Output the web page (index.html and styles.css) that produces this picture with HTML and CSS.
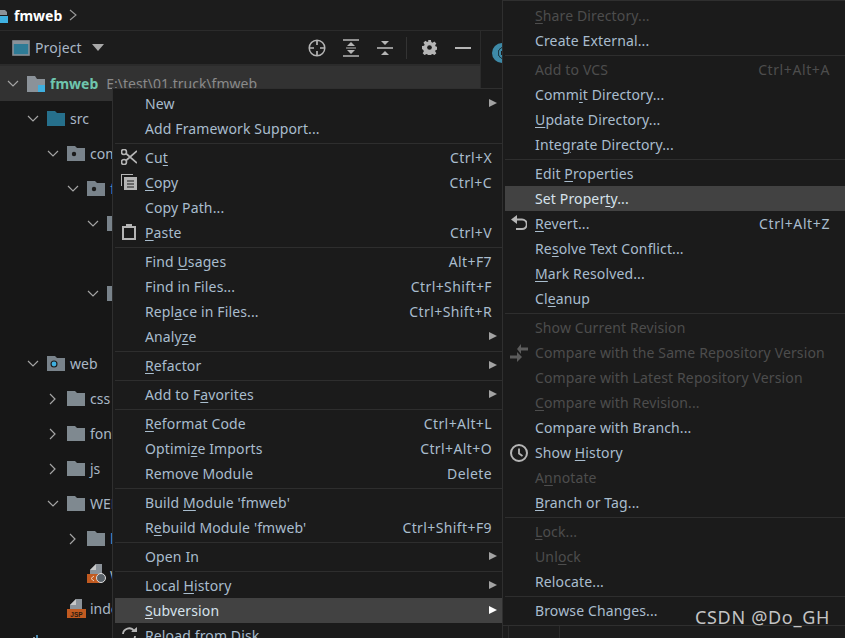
FILE: index.html
```html
<!DOCTYPE html>
<html lang="en">
<head>
<meta charset="utf-8">
<title>fmweb</title>
<link rel="stylesheet" href="styles.css">
</head>
<body>
<div class="ide">
  <div class="crumb">
    <svg class="ico16" viewBox="0 0 8 16"><path d="M-6 3H5l2 2v3H-6z" fill="#8b9299"/><rect x="0" y="9" width="8" height="7" fill="#3fb0e0"/></svg>
    <b>fmweb</b>
    <svg class="crumb-arrow" viewBox="0 0 8 12"><path d="M1 1l6 5-6 5" fill="none" stroke="#9a9a9a" stroke-width="1.1"/></svg>
  </div>
  <div class="panel">
    <div class="toolbar">
      <svg class="proj" viewBox="0 0 18 16"><rect x="1" y="1" width="16" height="14" fill="#2e7b96" stroke="#8a9198" stroke-width="1.6"/><rect x="1" y="1" width="16" height="3" fill="#8a9198"/></svg>
      <span class="proj-name">Project</span>
      <svg class="caret" viewBox="0 0 12 7"><path d="M0 0h12L6 7z" fill="#a8a8a8"/></svg>
      <div class="tools">
        <svg class="t18" viewBox="0 0 18 18"><circle cx="9" cy="9" r="7.800" fill="none" stroke="#b5b5b5" stroke-width="1.500"/><path d="M9 1v5M9 12v5M1 9h5M12 9h5" stroke="#b5b5b5" stroke-width="1.700"/></svg>
        <svg class="t16 wide" viewBox="0 0 16 18"><path d="M0 1h16M0 17h16" stroke="#b5b5b5" stroke-width="1.600"/><path d="M4 7l4-4 4 4zM4 11l4 4 4-4z" fill="#b5b5b5"/><path d="M3 9h10" stroke="#b5b5b5"/></svg>
        <svg class="t16" viewBox="0 0 16 18"><path d="M0 9h16" stroke="#b5b5b5" stroke-width="1.600"/><path d="M4 2l4 4 4-4zM4 16l4-4 4 4z" fill="#b5b5b5"/></svg>
        <i class="tool-sep"></i>
        <svg class="t15" viewBox="0 0 16 16"><path d="M6.500 0h3l.4 2.200 1.400.6 1.900-1.300 2.100 2.100-1.300 1.900.6 1.400 2.200.4v3l-2.200.4-.6 1.400 1.300 1.900-2.100 2.100-1.900-1.300-1.400.6-.4 2.200h-3l-.4-2.200-1.400-.6-1.900 1.300-2.100-2.100 1.300-1.900-.6-1.400L0 9.500v-3l2.200-.4.6-1.400-1.300-1.900 2.100-2.100 1.900 1.300 1.400-.6z" fill="#b5b5b5"/><circle cx="8" cy="8" r="2.500" fill="#1b1b1b"/></svg>
        <svg class="t16" viewBox="0 0 16 18"><path d="M0 9h16" stroke="#b5b5b5" stroke-width="2"/></svg>
      </div>
    </div>
    <div class="tree">
      <div class="row selected l0"><svg class="chev" viewBox="0 0 12 8"><path d="M1 1l5 5 5-5" fill="none" stroke="#a5a5a5" stroke-width="1.200"/></svg><svg class="fold tall" viewBox="0 0 18 16"><path d="M0 0h8l2 3h8v13H0z" fill="#8b9299"/><rect x="11" y="9" width="7" height="7" fill="#3fb0e0"/></svg><b class="root">fmweb</b><span class="path">E:\test\01.truck\fmweb</span></div>
      <div class="row l1"><svg class="chev" viewBox="0 0 12 8"><path d="M1 1l5 5 5-5" fill="none" stroke="#a5a5a5" stroke-width="1.200"/></svg><svg class="fold" viewBox="0 0 18 15"><path d="M0 0h8l2 2h8v13H0z" fill="#26708c"/></svg><span>src</span></div>
      <div class="row l2"><svg class="chev" viewBox="0 0 12 8"><path d="M1 1l5 5 5-5" fill="none" stroke="#a5a5a5" stroke-width="1.200"/></svg><svg class="fold" viewBox="0 0 18 15"><path d="M0 0h8l2 2h8v13H0z" fill="#79838b"/><circle cx="7" cy="8" r="2.200" fill="#1b1b1b"/></svg><span>com</span></div>
      <div class="row l3"><svg class="chev" viewBox="0 0 12 8"><path d="M1 1l5 5 5-5" fill="none" stroke="#a5a5a5" stroke-width="1.200"/></svg><svg class="fold" viewBox="0 0 18 15"><path d="M0 0h8l2 2h8v13H0z" fill="#79838b"/><circle cx="7" cy="8" r="2.200" fill="#1b1b1b"/></svg><span class="blue">fm</span></div>
      <div class="row l4"><svg class="chev" viewBox="0 0 12 8"><path d="M1 1l5 5 5-5" fill="none" stroke="#a5a5a5" stroke-width="1.200"/></svg><svg class="fold" viewBox="0 0 18 15"><path d="M0 0h8l2 2h8v13H0z" fill="#79838b"/></svg></div>
      <div class="row"></div>
      <div class="row l4"><svg class="chev" viewBox="0 0 12 8"><path d="M1 1l5 5 5-5" fill="none" stroke="#a5a5a5" stroke-width="1.200"/></svg><svg class="fold" viewBox="0 0 18 15"><path d="M0 0h8l2 2h8v13H0z" fill="#79838b"/></svg></div>
      <div class="row"></div>
      <div class="row l1"><svg class="chev" viewBox="0 0 12 8"><path d="M1 1l5 5 5-5" fill="none" stroke="#a5a5a5" stroke-width="1.200"/></svg><svg class="fold" viewBox="0 0 18 15"><path d="M0 0h8l2 2h8v13H0z" fill="#79838b"/><circle cx="7" cy="8" r="3.500" fill="#1b1b1b"/><circle cx="7" cy="8" r="2.400" fill="#3fb0e0"/></svg><span>web</span></div>
      <div class="row l2"><svg class="chev side" viewBox="0 0 8 12"><path d="M1 1l5 5-5 5" fill="none" stroke="#a5a5a5" stroke-width="1.200"/></svg><svg class="fold" viewBox="0 0 18 15"><path d="M0 0h8l2 2h8v13H0z" fill="#7f8990"/></svg><span>css</span></div>
      <div class="row l2"><svg class="chev side" viewBox="0 0 8 12"><path d="M1 1l5 5-5 5" fill="none" stroke="#a5a5a5" stroke-width="1.200"/></svg><svg class="fold" viewBox="0 0 18 15"><path d="M0 0h8l2 2h8v13H0z" fill="#7f8990"/></svg><span>fonts</span></div>
      <div class="row l2"><svg class="chev side" viewBox="0 0 8 12"><path d="M1 1l5 5-5 5" fill="none" stroke="#a5a5a5" stroke-width="1.200"/></svg><svg class="fold" viewBox="0 0 18 15"><path d="M0 0h8l2 2h8v13H0z" fill="#7f8990"/></svg><span>js</span></div>
      <div class="row l2"><svg class="chev" viewBox="0 0 12 8"><path d="M1 1l5 5 5-5" fill="none" stroke="#a5a5a5" stroke-width="1.200"/></svg><svg class="fold" viewBox="0 0 18 15"><path d="M0 0h8l2 2h8v13H0z" fill="#7f8990"/></svg><span>WEB-INF</span></div>
      <div class="row l3"><svg class="chev side" viewBox="0 0 8 12"><path d="M1 1l5 5-5 5" fill="none" stroke="#a5a5a5" stroke-width="1.200"/></svg><svg class="fold" viewBox="0 0 18 15"><path d="M0 0h8l2 2h8v13H0z" fill="#7f8990"/></svg><span class="blue">lib</span></div>
      <div class="row l3 nochev"><svg class="fold" viewBox="0 0 19 19"><path d="M9 0h6v10H3V6z" fill="#8b9299"/><path d="M3 6l6-6v6z" fill="#c8c8c8"/><rect x="0" y="10" width="13" height="9" fill="#c15a20"/><path d="M7 12l-3 2.500L7 17" fill="none" stroke="#e8d0c0"/><circle cx="14" cy="14" r="4.500" fill="#5a6269" stroke="#dedede"/></svg><span>web.xml</span></div>
      <div class="row l2 nochev"><svg class="fold" viewBox="0 0 19 19"><path d="M9 0h6v10H3V6z" fill="#8b9299"/><path d="M3 6l6-6v6z" fill="#c8c8c8"/><rect x="0" y="10" width="19" height="9" fill="#c15a20"/><text x="9.500" y="17.500" text-anchor="middle" class="jsp">JSP</text></svg><span>index.jsp</span></div>
      <div class="row l1 nochev"><svg class="tiny" viewBox="0 0 14 18"><path d="M1 4h2v14H1zM6 2h2v16H6z" fill="#8b9299"/><path d="M3.500 3h2v15h-2z" fill="#5f9e6e"/><path d="M9 0h2v18H9z" fill="#4d8cb0"/></svg></div>
    </div>
  </div>
  <div class="gutter"><i class="badge"></i></div>
</div>

<ul class="menu menu-main">
  <li class="item">New<em class="sub"></em></li>
  <li class="item">Add Framework Support...</li>
  <li class="sep"></li>
  <li class="item"><svg class="micon" viewBox="0 0 16 16"><circle cx="3" cy="13" r="2.500" fill="none" stroke="#b5b5b5" stroke-width="1.600"/><circle cx="3" cy="3" r="2.500" fill="none" stroke="#b5b5b5" stroke-width="1.600"/><path d="M5 4.500L16 14M5 11.500L16 2" stroke="#b5b5b5" stroke-width="1.700"/></svg>Cu<u>t</u><kbd>Ctrl+X</kbd></li>
  <li class="item"><svg class="micon" viewBox="0 0 16 16"><path d="M0 0h12v1H1v11H0z" fill="#b5b5b5"/><rect x="3" y="3" width="13" height="13" fill="#b5b5b5"/><path d="M6 7h7M6 10h7M6 13h7" stroke="#1b1b1b" stroke-width="1.200"/></svg><u>C</u>opy<kbd>Ctrl+C</kbd></li>
  <li class="item">Copy Path...</li>
  <li class="item"><svg class="micon" viewBox="0 0 16 16"><rect x="2" y="3" width="12" height="12" fill="none" stroke="#b5b5b5" stroke-width="2"/><rect x="5" y="0" width="6" height="4" fill="#b5b5b5"/></svg><u>P</u>aste<kbd>Ctrl+V</kbd></li>
  <li class="sep"></li>
  <li class="item">Find <u>U</u>sages<kbd>Alt+F7</kbd></li>
  <li class="item">Find in Files...<kbd>Ctrl+Shift+F</kbd></li>
  <li class="item">Repl<u>a</u>ce in Files...<kbd>Ctrl+Shift+R</kbd></li>
  <li class="item">Analy<u>z</u>e<em class="sub"></em></li>
  <li class="sep"></li>
  <li class="item"><u>R</u>efactor<em class="sub"></em></li>
  <li class="sep"></li>
  <li class="item">Add to F<u>a</u>vorites<em class="sub"></em></li>
  <li class="sep"></li>
  <li class="item"><u>R</u>eformat Code<kbd>Ctrl+Alt+L</kbd></li>
  <li class="item">Optimi<u>z</u>e Imports<kbd>Ctrl+Alt+O</kbd></li>
  <li class="item">Remove Module<kbd>Delete</kbd></li>
  <li class="sep"></li>
  <li class="item">Build <u>M</u>odule 'fmweb'</li>
  <li class="item">R<u>e</u>build Module 'fmweb'<kbd>Ctrl+Shift+F9</kbd></li>
  <li class="sep"></li>
  <li class="item">Open In<em class="sub"></em></li>
  <li class="sep"></li>
  <li class="item">Local <u>H</u>istory<em class="sub"></em></li>
  <li class="item active"><u>S</u>ubversion<em class="sub"></em></li>
  <li class="item"><svg class="micon" viewBox="0 0 16 16"><path d="M2 7a6 6 0 0 1 11-3M14 9a6 6 0 0 1-11 3" fill="none" stroke="#b5b5b5" stroke-width="1.800"/><path d="M10 5h6V0zM6 11H0v5z" fill="#b5b5b5"/></svg>Reload from Disk</li>
</ul>

<ul class="menu menu-sub">
  <li class="item off"><u>S</u>hare Directory...</li>
  <li class="item">Create External...</li>
  <li class="sep"></li>
  <li class="item off">Add to VCS<kbd>Ctrl+Alt+A</kbd></li>
  <li class="item">Comm<u>i</u>t Directory...</li>
  <li class="item"><u>U</u>pdate Directory...</li>
  <li class="item">Inte<u>g</u>rate Directory...</li>
  <li class="sep"></li>
  <li class="item">Edit <u>P</u>roperties</li>
  <li class="item active">Set Proper<u>t</u>y...</li>
  <li class="item"><svg class="micon" viewBox="0 0 16 16"><path d="M4 4.500h7a4.800 4.800 0 0 1 0 9.600H5" fill="none" stroke="#b5b5b5" stroke-width="2"/><path d="M6 0v9L0 4.500z" fill="#b5b5b5"/></svg><u>R</u>evert...<kbd>Ctrl+Alt+Z</kbd></li>
  <li class="item">Re<u>s</u>olve Text Conflict...</li>
  <li class="item"><u>M</u>ark Resolved...</li>
  <li class="item">Cl<u>e</u>anup</li>
  <li class="sep"></li>
  <li class="item off">Show Current Revision</li>
  <li class="item off"><svg class="micon big" viewBox="0 0 18 18"><path d="M11 0v10L7 5z" fill="#5c5c5c"/><path d="M11 3.500h7v3h-7z" fill="#5c5c5c"/><path d="M7 8v10l5-5z" fill="#5c5c5c"/><path d="M0 11.500h7v3H0z" fill="#5c5c5c"/></svg>Compare with the Same Repository Version</li>
  <li class="item off">Compare with Latest Repository Version</li>
  <li class="item off"><u>C</u>ompare with Revision...</li>
  <li class="item">Compare with Branch...</li>
  <li class="item"><svg class="micon big" viewBox="0 0 18 18"><circle cx="9" cy="9" r="8" fill="none" stroke="#b5b5b5" stroke-width="2"/><path d="M9 4.500V9.500L12.500 12" fill="none" stroke="#b5b5b5" stroke-width="1.800"/></svg>Show <u>H</u>istory</li>
  <li class="item off">A<u>n</u>notate</li>
  <li class="item"><u>B</u>ranch or Tag...</li>
  <li class="sep"></li>
  <li class="item off"><u>L</u>ock...</li>
  <li class="item off">Unl<u>o</u>ck</li>
  <li class="item">Relocate...</li>
  <li class="sep"></li>
  <li class="item">Browse Changes...</li>
</ul>

<div class="mark">CSDN @Do_GH</div>
</body>
</html>
```
FILE: styles.css
```css
* { box-sizing: border-box; }
html, body { margin: 0; height: 100%; overflow: hidden; background: #1c1c1c; }
body { position: relative; width: 845px; height: 638px; font: 14px "Noto Sans", "Open Sans", sans-serif; color: #a9b7c6; }
.ide { display: grid; grid-template-columns: 481px 1fr; grid-template-rows: 31px 1fr; height: 638px; background: #1c1c1c; }
.crumb { grid-column: 1 / 3; display: flex; align-items: center; gap: 6px; border-bottom: 1px solid #2b2b2b; color: #fff; }
.crumb b { font-size: 14px; font-weight: 700; }
.ico16 { width: 8px; height: 16px; }
.crumb-arrow { width: 8px; height: 12px; margin-left: 1px; }
.panel { border-right: 1px solid #2b2b2b; background: #171717; overflow: hidden; }
.toolbar { height: 35px; display: flex; align-items: center; padding-left: 12px; border-bottom: 2px solid #2b2b2b; background: #1c1c1c; }
.proj { width: 18px; height: 16px; }
.proj-name { margin-left: 5px; letter-spacing: .15px; }
.caret { width: 12px; height: 7px; margin-left: 10px; }
.tools { margin-left: auto; display: flex; align-items: center; gap: 17px; padding-right: 9px; }
.t18 { width: 18px; height: 18px; }
.t16 { width: 16px; height: 18px; }
.t16.wide { margin-right: 1px; }
.t15 { width: 15px; height: 15px; margin-right: 1px; }
.tool-sep { width: 1px; height: 22px; background: #333; margin: 0 -2px 0 -4px; }
.row { height: 35px; display: flex; align-items: center; gap: 5px; color: #a9b7c6; white-space: nowrap; }
.row:not(.selected) { width: 112px; overflow: hidden; }
.row.selected { background: #323232; }
.chev { width: 12px; height: 8px; flex: none; margin-right: 3px; }
.chev.side { width: 8px; height: 12px; margin: 0 5px 0 2px; }
.fold { width: 18px; height: 15px; flex: none; }
.fold.tall { height: 16px; }
.nochev .fold { width: 19px; height: 19px; }
.jsp { font: 700 6.500px "Liberation Sans", sans-serif; fill: #2a1a10; }
.tiny { width: 14px; height: 18px; }
.l0 { padding-left: 7px; }
.l1 { padding-left: 27px; }
.l2 { padding-left: 47px; }
.l3 { padding-left: 67px; }
.l4 { padding-left: 87px; }
.nochev { gap: 4px; }
.l2.nochev { padding-left: 67px; }
.l3.nochev { padding-left: 87px; }
.root { color: #6fc6ae; font-weight: 700; }
.path { color: #8a8a8a; margin-left: 3px; }
.blue { color: #4a90c8; }
.gutter { position: relative; background:
  linear-gradient(#2b2b2b, #2b2b2b) 0 57px / 100% 1px no-repeat,
  linear-gradient(#2b2b2b, #2b2b2b) 27px 100% / 1px 14px no-repeat,
  linear-gradient(#2b2b2b, #2b2b2b) 78px 100% / 1px 14px no-repeat,
  #1c1c1c; }
.badge { position: absolute; left: 11px; top: 12px; width: 20px; height: 20px; border-radius: 50%; background: radial-gradient(circle at 60% 50%, #1c1c1c 0 3px, #3e8aa8 3.500px 5px, #1c3a46 5.500px 6px, #3e8aa8 6.500px); }
.menu { position: absolute; margin: 0; padding: 2px 0 2px 2px; list-style: none; background: #1b1b1b; border: 1px solid #2f2f2f; }
.menu-main { left: 112px; top: 88px; width: 391px; height: 560px; }
.menu-sub { left: 502px; top: 0; width: 353px; height: 626px; }
.item { position: relative; height: 25px; line-height: 25px; padding-left: 30px; padding-right: 10px; color: #a9bdce; white-space: nowrap; display: block; letter-spacing: .13px; }
.menu-sub .item { padding-right: 24px; }
.item u { text-underline-offset: 2px; }
.item.off { color: #4d4d4d; }
.item.active { background: #424242; color: #d6e2ec; }
.sep { height: 2.500px; border-top: 1.500px solid #2e2e2e; margin-top: 1.500px; }
kbd { position: absolute; right: 10px; top: 0; font: inherit; color: inherit; letter-spacing: .4px; }
.menu-sub kbd { right: 24px; letter-spacing: .6px; }
.sub { position: absolute; right: 5px; top: 8px; width: 0; height: 0; border-left: 8px solid #a3a3a3; border-top: 4.500px solid transparent; border-bottom: 4.500px solid transparent; }
.active .sub { border-left-color: #fff; }
.micon { position: absolute; left: 6px; top: 4px; width: 16px; height: 16px; }
.micon.big { left: 5px; top: 3.500px; width: 18px; height: 18px; }
.mark { position: absolute; right: 15px; bottom: 9px; font-size: 18px; letter-spacing: .7px; color: #c4c4c4; }
```
